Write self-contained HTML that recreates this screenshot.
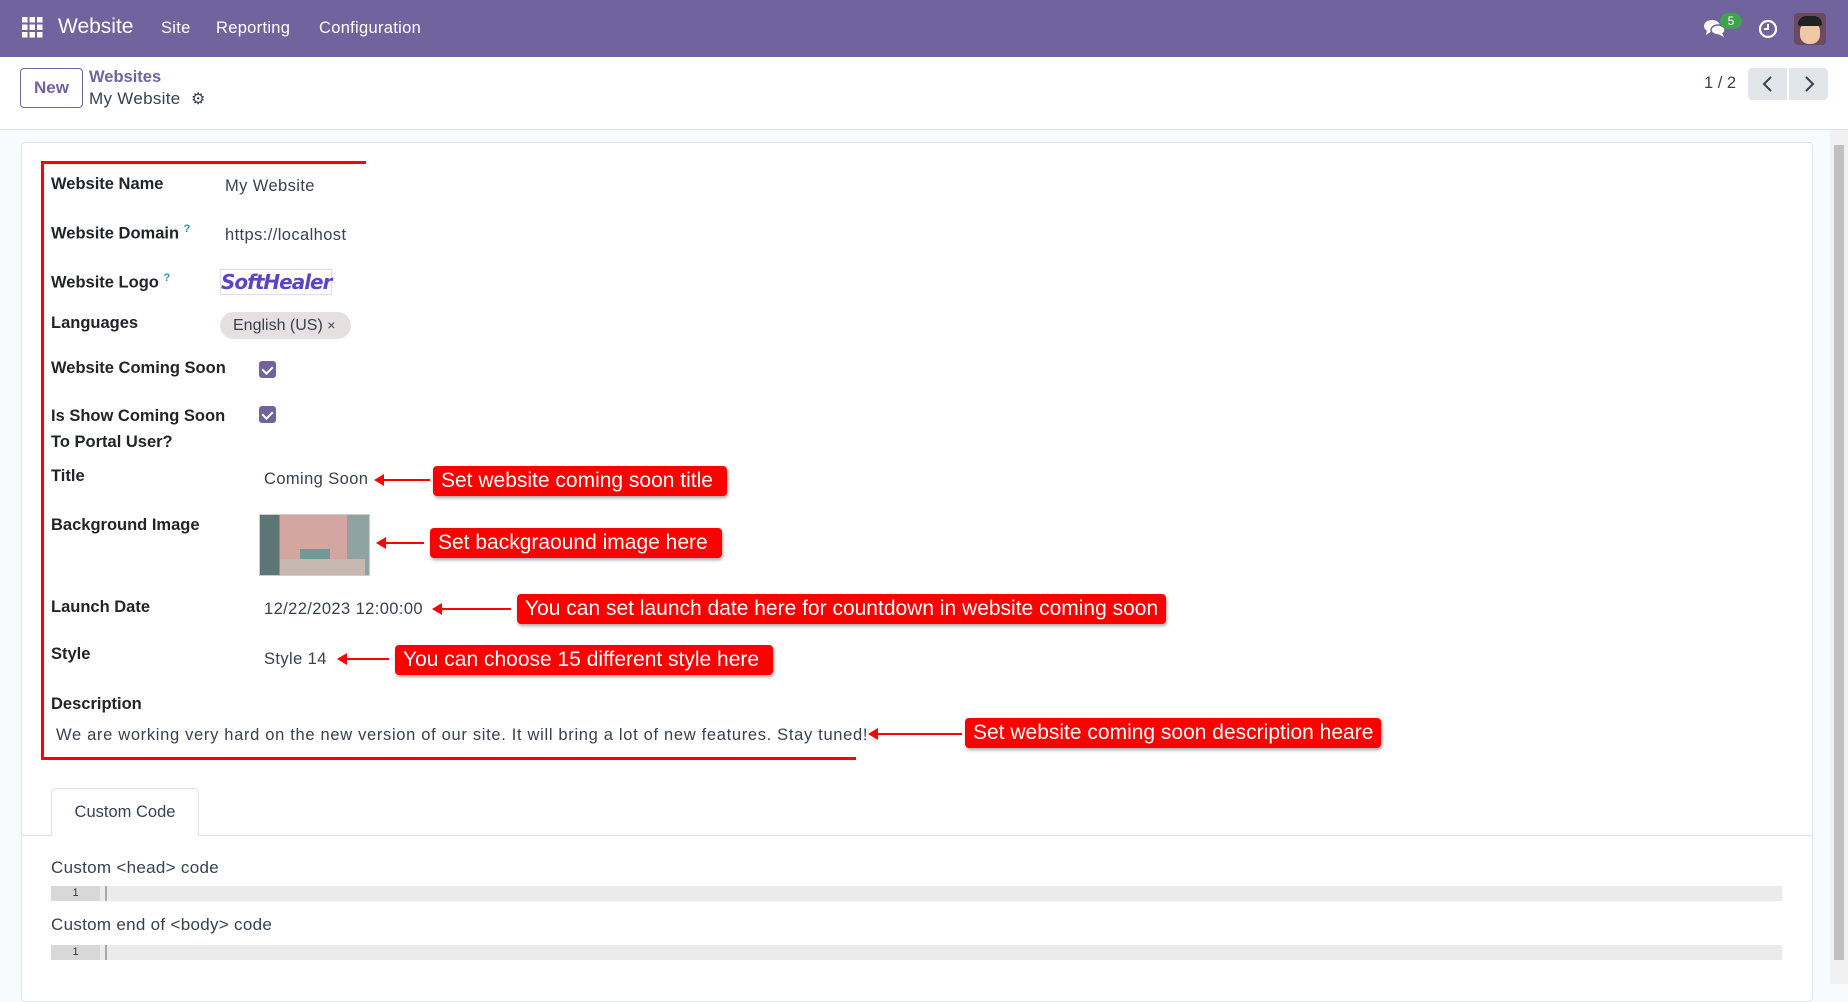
<!DOCTYPE html>
<html><head><meta charset="utf-8"><style>
*{box-sizing:border-box;margin:0;padding:0}
body{width:1848px;height:984px;overflow:hidden;font-family:"Liberation Sans",sans-serif;background:#f9fafb;position:relative;color:#212529}
.a{position:absolute;white-space:nowrap}
.nav{position:absolute;left:0;top:0;width:1848px;height:57px;background:#71639e;color:#fff}
.lbl{position:absolute;left:51px;font-weight:bold;font-size:16.5px;color:#212529}
.val{position:absolute;font-size:16.5px;color:#374151;letter-spacing:0.4px}
.box{position:absolute;background:#f00;color:#fff;font-size:21px;border-radius:4px;padding:0 8px;line-height:30px;box-shadow:1px 2px 3px rgba(0,0,0,.35)}
.arr{position:absolute;height:2px;background:#f00}
.arr:before{content:"";position:absolute;left:-2px;top:-5px;border-right:10px solid #f00;border-top:6px solid transparent;border-bottom:6px solid transparent}
.chk{position:absolute;width:17px;height:17px;background:#71639e;border-radius:3px}
.chk:after{content:"";position:absolute;left:5px;top:3px;width:5px;height:8px;border:solid #fff;border-width:0 2px 2px 0;transform:rotate(45deg)}
</style></head><body>
<div class="nav">
 <svg class="a" style="left:22px;top:17px" width="21" height="21" viewBox="0 0 21 21" fill="#fff"><rect x="0" y="0" width="5.5" height="5.5"/><rect x="7.5" y="0" width="5.5" height="5.5"/><rect x="15" y="0" width="5.5" height="5.5"/><rect x="0" y="7.5" width="5.5" height="5.5"/><rect x="7.5" y="7.5" width="5.5" height="5.5"/><rect x="15" y="7.5" width="5.5" height="5.5"/><rect x="0" y="15" width="5.5" height="5.5"/><rect x="7.5" y="15" width="5.5" height="5.5"/><rect x="15" y="15" width="5.5" height="5.5"/></svg>
 <div class="a" style="left:58px;top:15px;font-size:21px">Website</div>
 <div class="a" style="left:161px;top:19px;font-size:16.5px;letter-spacing:0.3px">Site</div>
 <div class="a" style="left:216px;top:19px;font-size:16.5px;letter-spacing:0.3px">Reporting</div>
 <div class="a" style="left:319px;top:19px;font-size:16.5px;letter-spacing:0.3px">Configuration</div>
 <svg class="a" style="left:1703px;top:18px" width="24" height="20" viewBox="0 0 24 20" fill="#fff"><ellipse cx="9" cy="8" rx="8" ry="6"/><path d="M4 12 L3 17 L9 13Z"/><ellipse cx="15" cy="12" rx="7" ry="5" fill="#fff" stroke="#71639e" stroke-width="1.5"/><path d="M19 15 L21 19 L15 16Z"/></svg>
 <div class="a" style="left:1720px;top:13px;width:22px;height:16px;border-radius:8px;background:#3fa34d;font-size:12px;text-align:center;line-height:16px;color:#fff">5</div>
 <svg class="a" style="left:1758px;top:19px" width="20" height="20" viewBox="0 0 20 20"><circle cx="10" cy="10" r="8" fill="none" stroke="#fff" stroke-width="2.2"/><path d="M10 5 V10 H6" fill="none" stroke="#fff" stroke-width="2"/></svg>
 <div class="a" style="left:1794px;top:13px;width:32px;height:32px;border-radius:4px;background:#6b4a5e;overflow:hidden"><div class="a" style="left:6px;top:9px;width:20px;height:22px;border-radius:9px;background:#f2c7a5"></div><div class="a" style="left:4px;top:3px;width:24px;height:10px;border-radius:8px 8px 2px 2px;background:#222"></div></div>
</div>
<div class="a" style="left:0;top:57px;width:1848px;height:73px;background:#fff;border-bottom:1px solid #dee2e6"></div>
<div class="a" style="left:20px;top:68px;width:63px;height:40px;border:1px solid #71639e;border-radius:4px;color:#71639e;font-weight:bold;font-size:17px;text-align:center;line-height:38px">New</div>
<div class="a" style="left:89px;top:68px;font-size:16.5px;font-weight:bold;color:#71639e">Websites</div>
<div class="a" style="left:89px;top:89px;font-size:17px;color:#374151;letter-spacing:0.3px">My Website</div>
<div class="a" style="left:191px;top:89px;font-size:16px;color:#374151">⚙</div>
<div class="a" style="left:1704px;top:74px;font-size:16.5px;color:#374151">1 / 2</div>
<div class="a" style="left:1748px;top:68px;width:39px;height:32px;background:#e2e5e9;border-radius:4px 0 0 4px"></div>
<div class="a" style="left:1789px;top:68px;width:39px;height:32px;background:#e2e5e9;border-radius:0 4px 4px 0"></div>
<svg class="a" style="left:1760px;top:74px" width="16" height="20"><path d="M11 3 L4 10 L11 17" fill="none" stroke="#374151" stroke-width="2"/></svg>
<svg class="a" style="left:1801px;top:74px" width="16" height="20"><path d="M5 3 L12 10 L5 17" fill="none" stroke="#374151" stroke-width="2"/></svg>

<div class="a" style="left:21px;top:142px;width:1792px;height:860px;background:#fff;border:1px solid #e1e4e8;border-radius:4px"></div>
<div class="a" style="left:1830px;top:130px;width:18px;height:854px;background:#f1f1f1"></div>
<div class="a" style="left:1834px;top:145px;width:10px;height:815px;background:#c1c1c1"></div>

<div class="a" style="left:41px;top:161px;width:325px;height:3px;background:#f00"></div>
<div class="a" style="left:41px;top:161px;width:3px;height:598px;background:#f00"></div>
<div class="a" style="left:41px;top:757px;width:815px;height:3px;background:#f00"></div>

<div class="lbl" style="top:175px">Website Name</div><div class="val" style="left:225px;top:177px">My Website</div>
<div class="lbl" style="top:223px">Website Domain <sup style="color:#2a8dc6;font-size:11px">?</sup></div><div class="val" style="left:225px;top:226px">https://localhost</div>
<div class="lbl" style="top:272px">Website Logo <sup style="color:#2a8dc6;font-size:11px">?</sup></div>
<div class="a" style="left:220px;top:269px;width:112px;height:26px;border:1px solid #dde;font-weight:900;font-style:italic;color:#5b45c6;font-size:20px;line-height:24px;text-align:center;font-family:'DejaVu Sans',sans-serif;letter-spacing:-1px">SoftHealer</div>
<div class="lbl" style="top:314px">Languages</div>
<div class="a" style="left:220px;top:312px;width:131px;height:27px;border-radius:14px;background:#e7e0e0;font-size:16px;line-height:27px;padding-left:13px;color:#374151">English (US) <span style="font-size:14px">×</span></div>
<div class="lbl" style="top:359px">Website Coming Soon</div><div class="chk" style="left:259px;top:361px"></div>
<div class="lbl" style="top:403px;line-height:26px">Is Show Coming Soon<br>To Portal User?</div><div class="chk" style="left:259px;top:406px"></div>
<div class="lbl" style="top:467px">Title</div><div class="val" style="left:264px;top:470px">Coming Soon</div>
<div class="lbl" style="top:516px">Background Image</div>
<div class="a" style="left:259px;top:514px;width:111px;height:62px;border:1px solid #ccc;background:linear-gradient(90deg,#5e7576 0 18%,#d4a6a0 18% 80%,#8fa3a3 80%)"><div class="a" style="left:20px;top:44px;width:85px;height:16px;background:#c9b8b0"></div><div class="a" style="left:40px;top:34px;width:30px;height:10px;background:#6f9a96"></div></div>
<div class="lbl" style="top:598px">Launch Date</div><div class="val" style="left:264px;top:600px">12/22/2023 12:00:00</div>
<div class="lbl" style="top:645px">Style</div><div class="val" style="left:264px;top:650px">Style 14</div>
<div class="lbl" style="top:695px">Description</div>
<div class="val" style="left:56px;top:726px;letter-spacing:0.68px">We are working very hard on the new version of our site. It will bring a lot of new features. Stay tuned!</div>

<div class="arr" style="left:376px;top:479px;width:54px"></div><div class="box" style="left:433px;top:466px">Set website coming soon title&nbsp;</div>
<div class="arr" style="left:378px;top:542px;width:46px"></div><div class="box" style="left:430px;top:528px">Set backgraound image here&nbsp;</div>
<div class="arr" style="left:434px;top:608px;width:77px"></div><div class="box" style="left:517px;top:594px">You can set launch date here for countdown in website coming soon</div>
<div class="arr" style="left:339px;top:658px;width:50px"></div><div class="box" style="left:395px;top:645px">You can choose 15 different style here&nbsp;</div>
<div class="arr" style="left:870px;top:733px;width:92px"></div><div class="box" style="left:965px;top:718px">Set website coming soon description heare</div>

<div class="a" style="left:22px;top:835px;width:1790px;height:1px;background:#dee2e6"></div>
<div class="a" style="left:51px;top:788px;width:148px;height:48px;background:#fff;border:1px solid #dee2e6;border-bottom:none;border-radius:5px 5px 0 0;text-align:center;line-height:46px;font-size:16.5px;color:#374151">Custom Code</div>
<div class="a" style="left:51px;top:858px;font-size:17px;color:#374151;letter-spacing:0.3px">Custom &lt;head&gt; code</div>
<div class="a" style="left:51px;top:886px;width:1731px;height:15px;background:#ebebeb"></div>
<div class="a" style="left:51px;top:886px;width:49px;height:15px;background:#d8d8d8;font-size:11px;line-height:15px;text-align:center;color:#333">1</div>
<div class="a" style="left:105px;top:886px;width:2px;height:15px;background:#aaa"></div>
<div class="a" style="left:51px;top:915px;font-size:17px;color:#374151;letter-spacing:0.3px">Custom end of &lt;body&gt; code</div>
<div class="a" style="left:51px;top:945px;width:1731px;height:15px;background:#ebebeb"></div>
<div class="a" style="left:51px;top:945px;width:49px;height:15px;background:#d8d8d8;font-size:11px;line-height:15px;text-align:center;color:#333">1</div>
<div class="a" style="left:105px;top:945px;width:2px;height:15px;background:#aaa"></div>
</body></html>
